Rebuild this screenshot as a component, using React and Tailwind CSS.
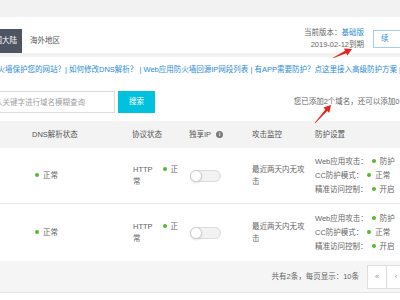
import React from "react";

const Dot = () => (
  <span className="inline-block w-[4px] h-[4px] rounded-full bg-[#56b833] align-middle mx-[4px] relative top-[-1px]" />
);

const Toggle = () => (
  <div className="relative w-[31px] h-[12px] rounded-full bg-[#f2f2f2] border border-[#dcdcdc]">
    <div className="absolute left-[-1px] top-[-1px] w-[12px] h-[12px] rounded-full bg-white border border-[#cfcfcf] shadow-sm" />
  </div>
);

const arrowPoints = (x1, y1, x2, y2) => {
  const dx = x2 - x1, dy = y2 - y1;
  const len = Math.hypot(dx, dy);
  const ux = dx / len, uy = dy / len;
  const nx = -uy, ny = ux;
  const hl = 7, hw = 4, sw = 1.3;
  const bx = x2 - ux * hl, by = y2 - uy * hl;
  const p = [
    [x1 + nx * 0.3, y1 + ny * 0.3],
    [bx + nx * sw, by + ny * sw],
    [bx + nx * hw, by + ny * hw],
    [x2, y2],
    [bx - nx * hw, by - ny * hw],
    [bx - nx * sw, by - ny * sw],
    [x1 - nx * 0.3, y1 - ny * 0.3],
  ];
  return p.map(([a, b]) => `${a.toFixed(1)},${b.toFixed(1)}`).join(" ");
};

const Row = ({ h, last }) => (
  <div className={`grid grid-cols-[125px_58px_62px_63px_172px] items-center ${h} ${last ? "" : "border-b border-[#e8e8e8]"}`}>
    <div className="pl-[32px]">
      <span className="ml-[-1px]"><Dot />正常</span>
    </div>
    <div className="pl-[8px] pr-[2px] leading-[11.5px]">
      HTTP<span className="ml-[6px]"><Dot />正常</span>
    </div>
    <div className="pl-[7px]">
      <Toggle />
    </div>
    <div className="pl-[7px] pr-[2px] leading-[12px]">最近两天内无攻击</div>
    <div className="pl-[7px] leading-[14px] whitespace-nowrap">
      <div>Web应用攻击：<Dot />防护</div>
      <div>CC防护模式：<Dot />正常</div>
      <div>精准访问控制：<Dot />开启</div>
    </div>
  </div>
);

export default function App() {
  return (
    <div className="relative w-[400px] h-[300px] overflow-hidden bg-[#f2f2f2] text-[7.5px] text-[#666] font-['Liberation_Sans','Noto_Sans_CJK_SC',sans-serif]">
      <div className="w-[480px]">
        <div className="h-[17px]" />

        {/* region tabs + version */}
        <div className="h-[36px] bg-white flex items-stretch">
          <div className="flex items-end">
            <div className="h-[24px] -ml-[18px] px-[5px] bg-[#4d5563] text-white flex items-center">中国大陆</div>
            <div className="h-[24px] px-[8px] flex items-center text-[#555]">海外地区</div>
          </div>
          <div className="ml-auto mr-[51px] mt-[10px] self-start flex items-center gap-[9px]">
            <div className="text-right leading-[11.5px]">
              <div>当前版本：<span className="text-[#2a8bd6]">基础版</span></div>
              <div>2019-02-12到期</div>
            </div>
            <div className="w-[56px] h-[18px] border border-[#9fd0ef] text-[#2a8bd6] flex items-center pl-[7px] tracking-[14px] whitespace-nowrap">续费</div>
          </div>
        </div>
        <div className="h-[4px]" />

        {/* main card */}
        <div className="bg-white">
          <div className="h-[26px] flex items-center whitespace-nowrap text-[#2a8bd6] -ml-[10px]">
            防火墙保护您的网站？| 如何修改DNS解析？ | Web应用防火墙回源IP网段列表 | 有APP需要防护？点这里接入高级防护方案 | 更多
          </div>

          <div className="h-[30px] pt-[8px] flex items-start">
            <input
              className="-ml-[30px] w-[145px] h-[22px] border border-[#dcdcdc] pl-[9px] outline-none text-[7.5px] placeholder:text-[#a0a0a0]"
              placeholder="请输入关键字进行域名模糊查询"
            />
            <div className="ml-[3px] w-[37px] h-[22px] bg-[#00c1de] text-white flex items-center justify-center">搜索</div>
            <div className="ml-auto mr-[58px] h-[22px] flex items-center whitespace-nowrap">您已添加2个域名，还可以添加0个域名</div>
          </div>

          {/* table */}
          <div className="mt-[8px]">
            <div className="grid grid-cols-[125px_58px_62px_63px_172px] items-center h-[27px] bg-[#f3f3f3] text-[#555]">
              <div className="pl-[32px]">DNS解析状态</div>
              <div className="pl-[7px]">协议状态</div>
              <div className="pl-[6px] flex items-center">
                独享IP
                <span className="ml-[5px] w-[7px] h-[7px] rounded-full bg-[#7a7a7a] text-white text-[5px] leading-none flex items-center justify-center font-bold">i</span>
              </div>
              <div className="pl-[7px]">攻击监控</div>
              <div className="pl-[7px]">防护设置</div>
            </div>
            <Row h="h-[56px]" />
            <Row h="h-[57px]" last />
          </div>

          {/* footer */}
          <div className="h-[31px] bg-[#f5f5f5] flex items-center justify-end pr-[17px]">
            <span className="mr-[9px]">共有2条，每页显示：10条</span>
            {["«", "‹", "1", "›", "»"].map((t) => (
              <div key={t} className="w-[20px] h-[24px] -ml-[1px] first:ml-0 bg-white border border-[#dedede] text-[#999] flex items-center justify-center">
                {t}
              </div>
            ))}
          </div>
          <div className="h-[8px] border-t border-[#e6e6e6]" />
        </div>
      </div>

      <svg className="absolute inset-0 pointer-events-none" width="400" height="300" viewBox="0 0 400 300">
        <polygon points={arrowPoints(333, 58, 352, 49)} fill="#e8251c" />
        <polygon points={arrowPoints(315, 123, 331, 105)} fill="#e8251c" />
      </svg>
    </div>
  );
}
